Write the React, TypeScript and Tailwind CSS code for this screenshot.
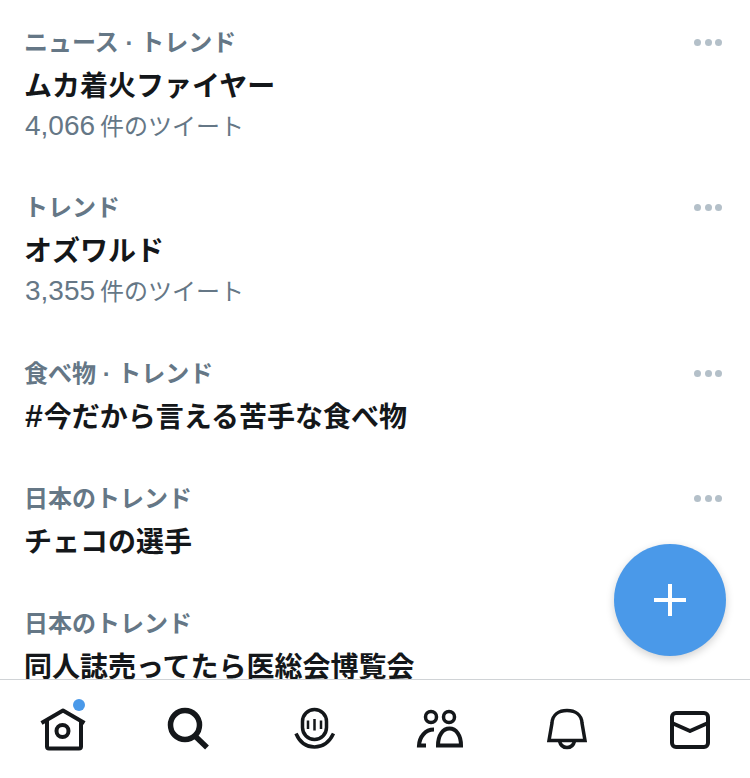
import type { ReactNode } from "react";

const trends: { label: string; title: ReactNode; num?: string; noMenu?: boolean; h: string }[] = [
  { label: "ニュース · トレンド", title: "ムカ着火ファイヤー", num: "4,066", h: "h-[165px]" },
  { label: "トレンド", title: "オズワルド", num: "3,355", h: "h-[166px]" },
  {
    label: "食べ物 · トレンド",
    title: (
      <>
        <span className="text-[32px] leading-[32px] ml-[1px] mr-[1px]">#</span>今だから言える苦手な食べ物
      </>
    ),
    h: "h-[125px]",
  },
  { label: "日本のトレンド", title: "チェコの選手", h: "h-[125px]" },
  { label: "日本のトレンド", title: "同人誌売ってたら医総会博覧会", noMenu: true, h: "h-[125px]" },
];

function Dots() {
  return (
    <div className="flex w-[28px] justify-between mt-[39px]">
      <span className="w-[7px] h-[7px] rounded-full bg-[#b4c0c9]" />
      <span className="w-[7px] h-[7px] rounded-full bg-[#b4c0c9]" />
      <span className="w-[7px] h-[7px] rounded-full bg-[#b4c0c9]" />
    </div>
  );
}

function Trend({ item }: { item: (typeof trends)[number] }) {
  return (
    <div className="flex justify-between items-start pl-[24px] pr-[28px]">
      <div className={item.h}>
        <div className="h-[36px] mt-[25px] text-[24px] leading-[36px] font-bold text-[#657786]">{item.label}</div>
        <div className="h-[42px] mt-[4px] text-[28px] leading-[44px] font-bold text-[#14171a]">{item.title}</div>
        {item.num && (
          <div className="h-[38px] text-[24px] leading-[38px] text-[#657786]">
            <span className="text-[28px] ml-[1px] mr-[5px]">{item.num}</span>件のツイート
          </div>
        )}
      </div>
      {!item.noMenu && <Dots />}
    </div>
  );
}

function NavIcon({ children }: { children: ReactNode }) {
  return (
    <svg width="48" height="48" viewBox="0 0 48 48" fill="none" stroke="#14171a" strokeWidth="4" strokeLinejoin="round">
      {children}
    </svg>
  );
}

export default function App() {
  return (
    <div
      className="relative w-[750px] h-[778px] flex flex-col overflow-hidden bg-white"
      style={{ fontFamily: '"Liberation Sans", "Noto Sans CJK JP", sans-serif' }}
    >
      <div className="flex-1 overflow-hidden">
        {trends.map((t, i) => (
          <Trend key={i} item={t} />
        ))}
      </div>

      {/* compose button */}
      <div className="absolute left-[614px] top-[544px] w-[112px] h-[112px] rounded-full bg-[#4a99e9] shadow-[0_3px_8px_rgba(0,0,0,0.18)] flex items-center justify-center">
        <svg width="34" height="34" viewBox="0 0 34 34" stroke="white" strokeWidth="4">
          <path d="M17 1V33M1 17H33" />
        </svg>
      </div>

      {/* bottom tabs */}
      <div className="h-[99px] border-t border-[#d0d3d6] bg-white grid grid-cols-6 pt-[25px]">
        <div className="relative flex justify-center">
          <NavIcon>
            <path d="M2.5 18L24 5.5L45.5 18" strokeWidth="4" />
            <path d="M8 15V41.5a2 2 0 0 0 2 2H40a2 2 0 0 0 2-2V15" />
            <circle cx="23.5" cy="26" r="6" />
          </NavIcon>
          <span className="absolute left-[73px] -top-[6px] w-[12px] h-[12px] rounded-full bg-[#4a99e9]" />
        </div>
        <div className="flex justify-center">
          <NavIcon>
            <circle cx="21" cy="20" r="14.5" strokeWidth="5.5" />
            <path d="M31 31L43 42.5" strokeWidth="5.5" />
          </NavIcon>
        </div>
        <div className="flex justify-center pl-[4px]">
          <NavIcon>
            <rect x="11.5" y="4.5" width="24" height="30" rx="12" strokeWidth="3.5" />
            <path d="M17 15.5V24M23.5 14V25.5M30 15.5V24" strokeWidth="2.5" />
            <path d="M5 28.5C9 38 16 42 23.5 42C31 42 38 38 42.5 28.5" strokeWidth="3.5" />
          </NavIcon>
        </div>
        <div className="flex justify-center pl-[5px]">
          <NavIcon>
            <circle cx="15" cy="12" r="5.5" strokeWidth="3.5" />
            <circle cx="33" cy="12" r="5.5" strokeWidth="3.5" />
            <path d="M22 40.5C22 30 27 23.5 33.5 23.5C40 23.5 45 30 45 40.5Z" strokeWidth="4" strokeLinejoin="miter" />
            <path d="M18 24.5C9 24.5 3.5 32 3 40.5H10" strokeWidth="4" strokeLinejoin="miter" />
          </NavIcon>
        </div>
        <div className="flex justify-center pl-[9px]">
          <NavIcon>
            <path d="M6 35.5H42L39 18C38.5 9.5 32 5.5 24 5.5C16 5.5 9.5 9.5 9 18Z" strokeWidth="3.5" strokeLinejoin="miter" />
            <path d="M16.5 36C17.5 40.5 20.5 42.5 24 42.5C27.5 42.5 30.5 40.5 31.5 36" strokeWidth="3.5" />
          </NavIcon>
        </div>
        <div className="flex justify-center pl-[5px]">
          <NavIcon>
            <rect x="6" y="8" width="36" height="34" rx="4" />
            <path d="M6 18L24 26L42 18" />
          </NavIcon>
        </div>
      </div>
    </div>
  );
}
